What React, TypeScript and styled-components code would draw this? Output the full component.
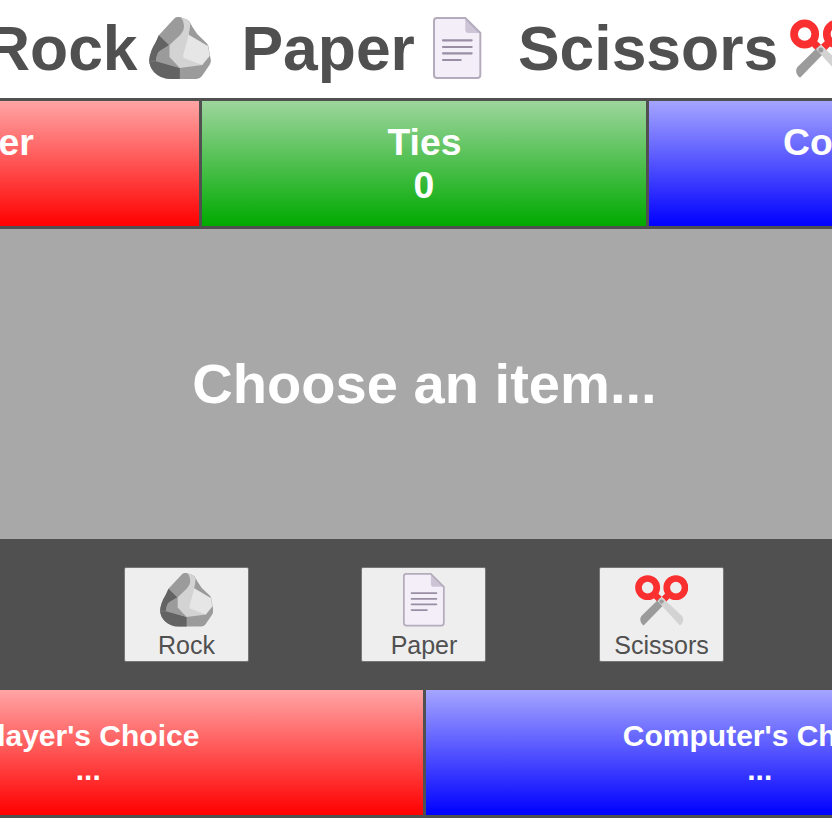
import React from "react";
import styled, { createGlobalStyle } from "styled-components";

const INK = "#505050";

const GlobalStyle = createGlobalStyle`
  html, body { margin: 0; padding: 0; background: #fff; overflow: hidden; }
  body { font-family: "Liberation Sans", Arial, sans-serif; color: ${INK}; }
  * { box-sizing: border-box; }
`;

const Viewport = styled.div`
  width: 832px;
  height: 832px;
  overflow: hidden;
`;

const Page = styled.main`
  width: 1346px;
  margin-left: -249px;
`;

const Title = styled.h1`
  display: flex;
  height: 98px;
  margin: 0;
  padding: 12px 0 0 234px;
  font-size: 62.4px;
  line-height: 73px;
  font-weight: bold;
  white-space: nowrap;
`;

const TitlePart = styled.span<{ $width: number; $gap: number }>`
  display: flex;
  flex: none;
  width: ${(p) => p.$width}px;
  svg { flex: none; margin: 5px 0 0 ${(p) => p.$gap}px; }
`;

const Scores = styled.section`
  display: grid;
  grid-template-columns: repeat(3, 1fr);
  gap: 3px;
  height: 131px;
  border: 3px solid ${INK};
  background: ${INK};
`;

const Choices = styled(Scores)`
  grid-template-columns: repeat(2, 1fr);
  height: 128px;
  border-top: 0;
`;

const Cell = styled.div<{ $from: string; $to: string }>`
  background: linear-gradient(${(p) => p.$from}, ${(p) => p.$to});
  color: #fff;
  font-weight: bold;
  text-align: center;
`;

const ScoreCell = styled(Cell)<{ $indent: number }>`
  padding-top: 20px;
  text-indent: ${(p) => p.$indent}px;
  font-size: 37.33px;
  line-height: 43px;
`;

const ChoiceCell = styled(Cell)`
  padding-top: 29px;
  font-size: 30px;
  line-height: 34px;
`;

const Result = styled.section`
  display: flex;
  align-items: center;
  justify-content: center;
  height: 310px;
  padding: 0 0 2px 1px;
  background: #a8a8a8;
  color: #fff;
  font-size: 56.1px;
  font-weight: bold;
`;

const Controls = styled.section`
  display: flex;
  justify-content: center;
  gap: 112.5px;
  height: 151px;
  padding: 28px 1px 0 0;
  background: ${INK};
`;

const Choice = styled.button`
  display: flex;
  flex-direction: column;
  align-items: center;
  width: 125px;
  height: 94.5px;
  padding: 5px 0 0 1px;
  border: 1px solid #767676;
  border-radius: 2px;
  background: #eee;
  color: ${INK};
  font: 25px/29px "Liberation Sans", Arial, sans-serif;
  svg { flex: none; margin-bottom: 4px; }
`;

function Rock({ size }: { size: number }) {
  return (
    <svg width={size} height={size} viewBox="27.5 27 186 186">
      <path d="M104 31Q112 24 123 28L142 35Q149 39 152 46L165 77L205 112L213 156Q214 163 209 171L186 205Q180 213 170 213H92Q62 213 43 193Q28 176 28 157Q30 131 48 102L57 82Z" fill="#9b9b9b" />
      <path d="M57 82L88 112L60 129Q51 134 48 158L120 180V213H92Q62 213 43 193Q28 176 28 157Q30 131 48 102Z" fill="#636363" />
      <path d="M88 111L60 129Q51 134 48 160L120 180L88 145Z" fill="#9b9b9b" />
      <path d="M120 27L142 35Q149 39 152 48L147 79L205 112L187 171L120 180L89 147V111L121 81Q135 65 132 50Q130 32 120 27Z" fill="#d3d3d3" />
      <path d="M147 80L204 113L210 143L187 171L134 151Q129 148 130 142Z" fill="#e6e6e6" />
      <path d="M152 48L172 78L202 107L204 114L147 80Q153 65 152 48Z" fill="#9b9b9b" />
      <path d="M28 160L48 159" stroke="#858585" strokeWidth="2" />
    </svg>
  );
}

function Paper({ size }: { size: number }) {
  return (
    <svg width={(size * 146) / 186} height={size} viewBox="38 27 146 186">
      <path d="M49 30H135L180 75V200Q180 210 171 210H50Q41 210 41 200V39Q41 30 49 30Z" fill="#f3eef8" />
      <path d="M135 30L180 75H145Q135 75 135 65Z" fill="#cdc4d6" />
      <path d="M49 30H135L180 75V200Q180 210 171 210H50Q41 210 41 200V39Q41 30 49 30Z" fill="none" stroke="#b4acbc" strokeWidth="6" />
      <path d="M68 97H154M68 117H154M68 136H154M68 156H121" stroke="#998ea4" strokeWidth="6.5" strokeLinecap="round" />
    </svg>
  );
}

function Scissors({ size }: { size: number }) {
  return (
    <svg width={size} height={size} viewBox="134 53 161 161">
      <path d="M191 129L204 115L226 136L212 151Z M238 129L225 115L203 136L216 151Z" fill="#f92f30" />
      <circle cx="172" cy="97" r="27.5" fill="none" stroke="#f92f30" strokeWidth="20" />
      <circle cx="257" cy="97" r="27.5" fill="none" stroke="#f92f30" strokeWidth="20" />
      <path d="M209 128L225 144L160 211Q150 203 150 192Q150 186 154 182Z" fill="#9b9b9b" />
      <path d="M202 137L214 125L275 182Q279 186 279 192Q279 203 269 211Z" fill="#d3d3d3" />
      <circle cx="214" cy="139" r="6.5" fill="#9b9b9b" />
    </svg>
  );
}

export default function App() {
  return (
    <>
      <GlobalStyle />
      <Viewport>
        <Page>
          <Title>
            <TitlePart $width={256.5} $gap={11.5}>Rock<Rock size={62} /></TitlePart>
            <TitlePart $width={276.5} $gap={18.5}>Paper<Paper size={62} /></TitlePart>
            <TitlePart $width={340} $gap={12}>Scissors<Scissors size={62} /></TitlePart>
          </Title>
          <Scores>
            <ScoreCell $indent={3} $from="#ffa5a5" $to="#ff0000">Player<br />0</ScoreCell>
            <ScoreCell $indent={1} $from="#9dd59d" $to="#00aa00">Ties<br />0</ScoreCell>
            <ScoreCell $indent={-1} $from="#a5a5ff" $to="#0000ff">Computer<br />0</ScoreCell>
          </Scores>
          <Result>Choose an item...</Result>
          <Controls>
            <Choice><Rock size={53.5} />Rock</Choice>
            <Choice><Paper size={53.5} />Paper</Choice>
            <Choice><Scissors size={53.5} />Scissors</Choice>
          </Controls>
          <Choices>
            <ChoiceCell $from="#ffa5a5" $to="#ff0000">Player's Choice<br />...</ChoiceCell>
            <ChoiceCell $from="#a5a5ff" $to="#0000ff">Computer's Choice<br />...</ChoiceCell>
          </Choices>
        </Page>
      </Viewport>
    </>
  );
}
